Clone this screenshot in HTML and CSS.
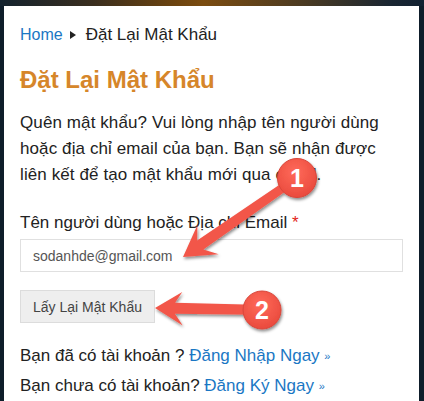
FILE: index.html
```html
<!DOCTYPE html>
<html lang="vi">
<head>
<meta charset="utf-8">
<title>Đặt Lại Mật Khẩu</title>
<link rel="stylesheet" href="styles.css">
</head>
<body>
<div class="topbar"></div>
<main class="card">
  <nav class="crumbs">
    <a href="#" class="link home">Home</a>
    <span class="caret"></span>
    <span class="current">Đặt Lại Mật Khẩu</span>
  </nav>
  <h1 class="title">Đặt Lại Mật Khẩu</h1>
  <p class="intro">Quên mật khẩu? Vui lòng nhập tên người dùng hoặc địa chỉ email của bạn. Bạn sẽ nhận được liên kết để tạo mật khẩu mới qua email.</p>
  <form class="form">
    <label class="label" for="user">Tên người dùng hoặc Địa chỉ Email <span class="req">*</span></label>
    <input id="user" class="input" type="text" value="sodanhde@gmail.com">
    <button type="button" class="btn">Lấy Lại Mật Khẩu</button>
  </form>
  <p class="line">Bạn đã có tài khoản ? <a href="#" class="link">Đăng Nhập Ngay <span class="raquo">»</span></a></p>
  <p class="line">Bạn chưa có tài khoản? <a href="#" class="link">Đăng Ký Ngay <span class="raquo">»</span></a></p>
</main>
<svg class="overlay" width="424" height="401" viewBox="0 0 424 401" xmlns="http://www.w3.org/2000/svg">
  <defs>
    <filter id="sh" x="-30%" y="-30%" width="160%" height="160%">
      <feDropShadow dx="1" dy="2" stdDeviation="1.6" flood-color="#000" flood-opacity="0.45"/>
    </filter>
    <radialGradient id="cg" cx="45%" cy="35%" r="70%">
      <stop offset="0" stop-color="#ff6a5a"/>
      <stop offset="1" stop-color="#e8483b"/>
    </radialGradient>
  </defs>
  <g filter="url(#sh)">
    <g transform="translate(183,257) rotate(-34.7)">
      <polygon points="0,0 30,-18 21,-5.5 124,-4.5 124,4.5 21,5.5 31,18" fill="#f2574a"/>
    </g>
    <circle cx="297" cy="178" r="19.5" fill="url(#cg)" stroke="#d8463a" stroke-width="1"/>
  </g>
  <g filter="url(#sh)">
    <g transform="translate(155,308) rotate(1)">
      <polygon points="0,0 27,-16.5 20,-5.5 100,-5 100,5 20,5.5 28,17" fill="#f2574a"/>
    </g>
    <circle cx="262" cy="310" r="19" fill="url(#cg)" stroke="#d8463a" stroke-width="1"/>
  </g>
  <text x="297" y="187" class="num">1</text>
  <text x="262" y="319" class="num">2</text>
</svg>
</body>
</html>
```
FILE: styles.css
```css
html, body {
  margin: 0;
  padding: 0;
}
body {
  background: #0e1d2a;
  font-family: "Liberation Sans", Arial, sans-serif;
  color: #222;
  width: 424px;
  height: 401px;
  overflow: hidden;
  position: relative;
}
.topbar {
  height: 6px;
  background: linear-gradient(90deg, #13222e 0%, #3a2e1e 22%, #6e440f 42%, #7b4c10 48%, #4a3a22 72%, #1a2632 92%, #112131 100%);
}
.card {
  margin-left: 4px;
  width: 415px;
  box-sizing: border-box;
  background: #fff;
  padding: 18px 16px 20px;
  min-height: 395px;
}
.crumbs {
  display: flex;
  align-items: center;
  font-size: 17px;
  line-height: 22px;
}
.link {
  color: #1a77c4;
  text-decoration: none;
}
.home {
  font-size: 16px;
}
.caret {
  width: 0;
  height: 0;
  border-top: 4.5px solid transparent;
  border-bottom: 4.5px solid transparent;
  border-left: 6px solid #222;
  margin: 0 10px 0 7px;
}
.current {
  color: #222;
}
.title {
  margin: 19px 0 0;
  font-size: 24px;
  line-height: 30px;
  font-weight: bold;
  color: #d6862a;
}
.intro {
  margin: 15px 0 0;
  max-width: 380px;
  font-size: 17px;
  line-height: 26px;
  letter-spacing: 0.1px;
  color: #222;
}
.form {
  margin: 22px 0 0;
  display: flex;
  flex-direction: column;
  align-items: flex-start;
}
.label {
  font-size: 17px;
  line-height: 26px;
  color: #222;
}
.req {
  color: #e2231a;
}
.input {
  margin-top: 3px;
  width: 383px;
  height: 33px;
  box-sizing: border-box;
  border: 1px solid #e0e0e0;
  padding: 0 12px;
  font-family: "Liberation Sans", Arial, sans-serif;
  font-size: 14px;
  color: #555;
  background: #fff;
  outline: none;
}
.btn {
  margin-top: 18px;
  height: 33px;
  box-sizing: border-box;
  padding: 0 12px;
  border: 1px solid #dcdcdc;
  background: #eeeeee;
  font-family: "Liberation Sans", Arial, sans-serif;
  font-size: 14px;
  color: #444;
  border-radius: 0;
}
.line {
  margin: 0;
  font-size: 17px;
  line-height: 30px;
}
.form + .line {
  margin-top: 18px;
}
.raquo {
  font-size: 11px;
  vertical-align: 1px;
}
.overlay {
  position: absolute;
  left: 0;
  top: 0;
  pointer-events: none;
}
.num {
  font-family: "Liberation Sans", Arial, sans-serif;
  font-weight: bold;
  font-size: 25px;
  fill: #fff;
  text-anchor: middle;
}
```
